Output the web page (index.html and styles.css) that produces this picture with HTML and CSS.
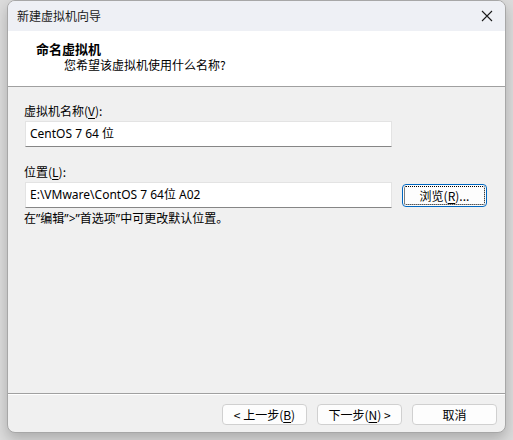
FILE: index.html
```html
<!DOCTYPE html>
<html lang="zh-CN">
<head>
<meta charset="utf-8">
<title>新建虚拟机向导</title>
<link rel="stylesheet" href="styles.css">
</head>
<body>
<div class="window">
  <div class="titlebar">
    <span class="title">新建虚拟机向导</span>
    <span class="close">
      <svg width="12" height="12" viewBox="0 0 12 12"><path d="M1 1 L11 11 M11 1 L1 11" stroke="#1b1b1b" stroke-width="1.1" fill="none"/></svg>
    </span>
  </div>
  <div class="header">
    <div class="h-title">命名虚拟机</div>
    <div class="h-sub">您希望该虚拟机使用什么名称?</div>
  </div>
  <div class="content">
    <div class="label">虚拟机名称(<u>V</u>):</div>
    <div class="row">
      <div class="textbox">CentOS 7 64 位</div>
    </div>
    <div class="label label-gap">位置(<u>L</u>):</div>
    <div class="row">
      <div class="textbox">E:\VMware\ContOS 7 64位 A02</div>
      <button class="btn focused"><span class="focus-rect">浏览(<u>R</u>)...</span></button>
    </div>
    <div class="hint">在<span class="q">”</span>编辑<span class="q">”&gt;”</span>首选项<span class="q">”</span>中可更改默认位置。</div>
  </div>
  <div class="footer">
    <button class="btn">&lt; 上一步(<u>B</u>)</button>
    <button class="btn">下一步(<u>N</u>) &gt;</button>
    <button class="btn cancel">取消</button>
  </div>
</div>
</body>
</html>
```

FILE: styles.css
```css
html, body {
  margin: 0;
  padding: 0;
}

body {
  width: 513px;
  height: 440px;
  background: #dcdcdc;
  font-family: "Noto Sans CJK SC", "Noto Sans", sans-serif;
  font-size: 12px;
  color: #000;
  overflow: hidden;
}

.window {
  margin-left: 7px;
  width: 497px;
  height: 431px;
  border: 1px solid #a7a7a7;
  border-radius: 8px;
  background: #f0f0f0;
  box-shadow: 0 6px 14px rgba(0, 0, 0, 0.22);
  display: flex;
  flex-direction: column;
  overflow: hidden;
}

.titlebar {
  height: 30px;
  flex: none;
  background: #eef0f5;
  display: flex;
  align-items: center;
  justify-content: space-between;
  padding: 0 10px 0 9px;
}

.title {
  font-size: 12px;
  line-height: 16px;
  color: #1a1a1a;
}

.close {
  display: flex;
  width: 12px;
  height: 12px;
  margin-right: 2px;
}

.header {
  flex: none;
  height: 56px;
  background: #fff;
  border-bottom: 1px solid #a0a0a0;
  padding: 9px 0 0 28px;
  box-sizing: border-box;
}

.h-title {
  font-size: 13px;
  font-weight: bold;
  line-height: 17px;
}

.h-sub {
  padding-left: 28px;
  line-height: 16px;
}

.content {
  flex: 1;
  padding: 16px 0 0 16px;
}

.label {
  line-height: 16px;
  height: 16px;
}

.label-gap {
  margin-top: 17px;
}

u {
  text-decoration: underline;
  text-underline-offset: 2px;
}

.row {
  display: flex;
  align-items: center;
  margin-top: 2px;
}

.textbox {
  margin-left: 1px;
  height: 24px;
  background: #fff;
  border: 1px solid #e3e3e3;
  border-bottom-color: #868686;
  padding-left: 4px;
  line-height: 23px;
  font-family: "Noto Sans", "Noto Sans CJK SC", sans-serif;
  font-size: 12px;
  box-sizing: content-box;
  width: 361px;
}

.btn {
  font-family: "Noto Sans CJK SC", "Noto Sans", sans-serif;
  font-size: 12px;
  color: #000;
  width: 85px;
  height: 21px;
  padding: 0;
  background: #fdfdfd;
  border: 1px solid #d0d0d0;
  border-radius: 4px;
  line-height: 18px;
}

.btn.focused {
  margin-left: 10px;
  height: 23px;
  border: 1px solid #0067c0;
  padding: 1px;
  display: flex;
}

.focus-rect {
  flex: 1;
  border: 1px dotted #000;
  border-radius: 2px;
  line-height: 17px;
}

.hint {
  margin-top: 2px;
  line-height: 16px;
}

/* Latin quote marks sit tight against the CJK text */
.hint .q {
  font-family: "Noto Sans", sans-serif;
}

.footer {
  flex: none;
  height: 39px;
  border-top: 1px solid #a0a0a0;
  box-shadow: inset 0 1px 0 #fff;
  display: flex;
  justify-content: flex-end;
  gap: 10px;
  padding: 10px 8px 0 0;
  box-sizing: border-box;
}
```
